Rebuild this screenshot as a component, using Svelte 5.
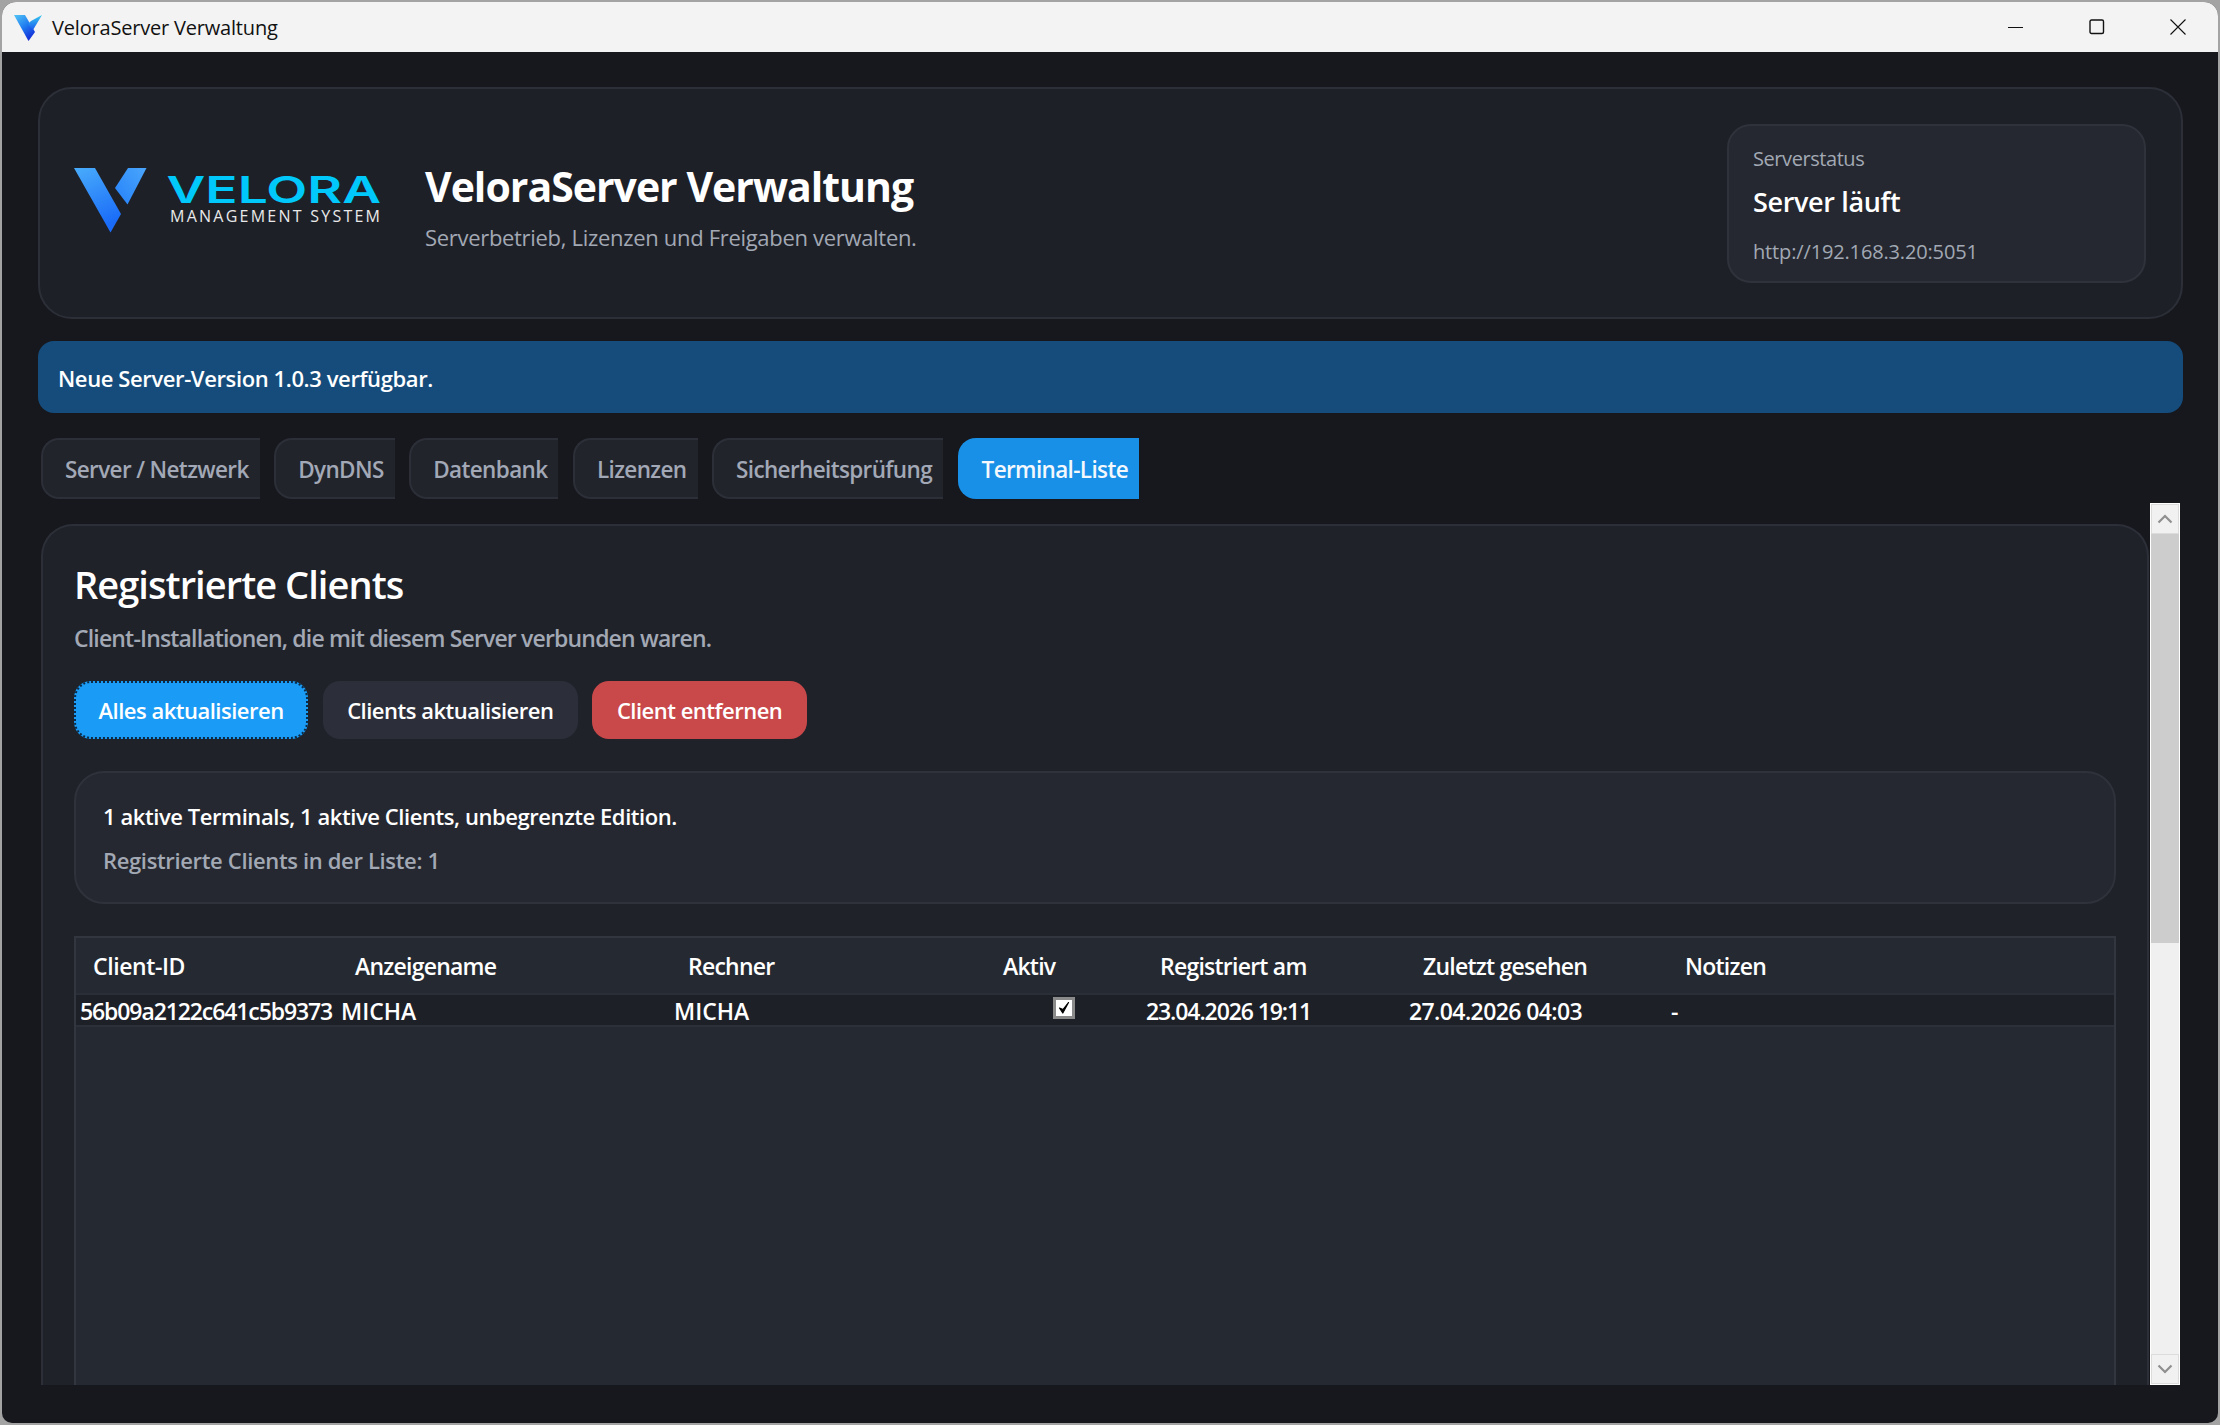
<script>
  const tabs = ['Server / Netzwerk', 'DynDNS', 'Datenbank', 'Lizenzen', 'Sicherheitsprüfung', 'Terminal-Liste'];
  const heads = ['Client-ID', 'Anzeigename', 'Rechner', 'Aktiv', 'Registriert am', 'Zuletzt gesehen', 'Notizen'];
</script>

<div class="window">
  <div class="titlebar">
    <svg class="appicon" viewBox="0 0 28 27" width="28" height="27">
      <defs>
        <linearGradient id="ti" x1="0" y1="0" x2="0.6" y2="1">
          <stop offset="0" stop-color="#53c6f5" />
          <stop offset="0.55" stop-color="#1f7bf0" />
          <stop offset="1" stop-color="#1430d8" />
        </linearGradient>
        <linearGradient id="tj" x1="0" y1="0" x2="0" y2="1">
          <stop offset="0" stop-color="#36c8ee" />
          <stop offset="1" stop-color="#1a5cf0" />
        </linearGradient>
      </defs>
      <path d="M0 1 H11 L21 18 L14.5 27 Z" fill="url(#ti)" />
      <path d="M17 7 L28 1 L19 16 L14 10 Z" fill="url(#tj)" />
    </svg>
    <span class="apptitle">VeloraServer Verwaltung</span>
    <div class="controls">
      <svg viewBox="0 0 16 16" width="16" height="16"><path d="M0 8.5 H15" stroke="#111" stroke-width="1.1" /></svg>
      <svg viewBox="0 0 16 16" width="16" height="16"><rect x="1" y="1" width="13.5" height="13.5" rx="1.5" fill="none" stroke="#111" stroke-width="1.4" /></svg>
      <svg viewBox="0 0 16 16" width="16" height="16"><path d="M0.5 0.5 L15.5 15.5 M15.5 0.5 L0.5 15.5" stroke="#111" stroke-width="1.1" /></svg>
    </div>
  </div>

  <div class="content">
    <header class="hero">
      <svg class="logo" viewBox="0 0 310 66" width="310" height="66">
        <defs>
          <linearGradient id="la" x1="0" y1="0" x2="0.3" y2="1">
            <stop offset="0" stop-color="#49acfb" />
            <stop offset="1" stop-color="#1a6cf8" />
          </linearGradient>
          <linearGradient id="lb" x1="1" y1="0" x2="0" y2="1">
            <stop offset="0" stop-color="#4aa6fb" />
            <stop offset="1" stop-color="#2581fa" />
          </linearGradient>
        </defs>
        <path d="M0 0 H21 L47 46 L36.5 64.5 Z" fill="url(#la)" />
        <path d="M54 0 H72.5 L53.5 36.5 L41 20 Z" fill="url(#lb)" />
        <text class="lv" x="92.5" y="35" textLength="214.5" lengthAdjust="spacingAndGlyphs">VELORA</text>
        <text class="lm" x="96" y="54" textLength="210" lengthAdjust="spacing">MANAGEMENT SYSTEM</text>
      </svg>
      <div class="herotext">
        <h1>VeloraServer Verwaltung</h1>
        <p>Serverbetrieb, Lizenzen und Freigaben verwalten.</p>
      </div>
      <div class="status">
        <div class="st-label">Serverstatus</div>
        <div class="st-value">Server läuft</div>
        <div class="st-url">http://192.168.3.20:5051</div>
      </div>
    </header>

    <div class="banner">Neue Server-Version 1.0.3 verfügbar.</div>

    <nav class="tabs">
      {#each tabs as t, i}
        <button class="tab" class:active={i === 5}>{t}</button>
      {/each}
    </nav>

    <div class="scrollarea">
      <section class="panel">
        <h2>Registrierte Clients</h2>
        <p class="sub">Client-Installationen, die mit diesem Server verbunden waren.</p>
        <div class="actions">
          <button class="btn primary">Alles aktualisieren</button>
          <button class="btn neutral">Clients aktualisieren</button>
          <button class="btn danger">Client entfernen</button>
        </div>
        <div class="info">
          <div class="info-a">1 aktive Terminals, 1 aktive Clients, unbegrenzte Edition.</div>
          <div class="info-b">Registrierte Clients in der Liste: 1</div>
        </div>
        <div class="table">
          <div class="row head">
            {#each heads as h}<div class="hc">{h}</div>{/each}
          </div>
          <div class="row body">
            <div class="c digits clip">56b09a2122c641c5b9373</div>
            <div class="c name">MICHA</div>
            <div class="c name">MICHA</div>
            <div class="c center">
              <span class="check">
                <svg viewBox="0 0 16 16" width="16" height="16"><path d="M3.5 8 L6.8 13 L12.5 2.5 L7 9.5 Z" fill="#000" stroke="#000" stroke-width="1.2" stroke-linejoin="round" /></svg>
              </span>
            </div>
            <div class="c digits">23.04.2026 19:11</div>
            <div class="c digits wide">27.04.2026 04:03</div>
            <div class="c">-</div>
          </div>
        </div>
      </section>

      <div class="scrollbar">
        <div class="sb-btn"><svg viewBox="0 0 16 10" width="16" height="10"><path d="M1.5 8.5 L8 2 L14.5 8.5" fill="none" stroke="#8f8f8f" stroke-width="2.2" /></svg></div>
        <div class="sb-thumb"></div>
        <div class="sb-track"></div>
        <div class="sb-btn"><svg viewBox="0 0 16 10" width="16" height="10"><path d="M1.5 1.5 L8 8 L14.5 1.5" fill="none" stroke="#8f8f8f" stroke-width="2.2" /></svg></div>
      </div>
    </div>
  </div>
</div>

<style>
  :global(body) {
    margin: 0;
    background: #a3a3a3;
    font-family: "Open Sans", "Noto Sans", sans-serif;
  }
  .window {
    box-sizing: border-box;
    width: 2216px;
    height: 1421px;
    margin: 2px;
    border-radius: 14px 14px 10px 10px;
    overflow: hidden;
    background: #17181d;
    display: flex;
    flex-direction: column;
  }
  .titlebar {
    height: 50px;
    flex: none;
    background: #f3f3f3;
    display: flex;
    align-items: center;
    padding-left: 12px;
    color: #111;
  }
  .appicon { margin-right: 10px; }
  .apptitle { font-size: 20px; letter-spacing: -0.19px; }
  .controls {
    margin-left: auto;
    margin-right: 32px;
    display: flex;
    gap: 65px;
  }
  .content {
    padding: 35px 35px 0 36px;
    display: flex;
    flex-direction: column;
  }
  .hero {
    box-sizing: border-box;
    height: 232px;
    background: #1e2027;
    border: 2px solid #2c2f38;
    border-radius: 34px;
    display: flex;
    align-items: center;
    padding: 0 35px 0 34px;
  }
  .logo { flex: none; margin-top: -4px; }
  .lv {
    font-family: "Inter", sans-serif;
    font-weight: 600;
    font-size: 37px;
    fill: #00c8fa;
  }
  .lm {
    font-family: "Open Sans", sans-serif;
    font-size: 16px;
    fill: #e9e9ea;
  }
  .herotext { margin-left: 41px; margin-top: 4px; }
  h1 {
    margin: 0;
    font-size: 41px;
    line-height: 54px;
    font-weight: 700;
    color: #fff;
    letter-spacing: -1px;
  }
  .herotext p {
    margin: 9px 0 0;
    font-size: 22px;
    line-height: 30px;
    color: #a2a8b4;
    letter-spacing: -0.31px;
  }
  .status {
    box-sizing: border-box;
    margin-left: auto;
    width: 419px;
    height: 159px;
    background: #252830;
    border: 2px solid #2f323b;
    border-radius: 24px;
    padding: 19px 24px;
  }
  .st-label { font-size: 20px; line-height: 27px; color: #a2a8b4; letter-spacing: -0.43px; }
  .st-value { font-size: 27px; line-height: 36px; font-weight: 600; color: #fff; margin-top: 12px; letter-spacing: -0.35px; }
  .st-url { font-size: 20px; line-height: 27px; color: #a2a8b4; margin-top: 18px; letter-spacing: -0.15px; }
  .banner {
    box-sizing: border-box;
    height: 72px;
    margin-top: 22px;
    background: #154c7c;
    border-radius: 16px;
    display: flex;
    align-items: center;
    padding: 2px 0 0 20px;
    color: #fff;
    font-size: 22px;
    font-weight: 600;
    letter-spacing: -0.39px;
  }
  .tabs {
    margin: 25px 0 0 3px;
    display: flex;
    gap: 14.5px;
    height: 61px;
  }
  .tab {
    box-sizing: border-box;
    height: 61px;
    font: inherit;
    font-size: 22.5px;
    font-weight: 600;
    letter-spacing: -0.63px;
    padding: 2px 11px 0 22px;
    background: #21242b;
    color: #a2a8b6;
    border: 2px solid #2c2f38;
    border-right: none;
    border-radius: 18px 0 0 18px;
    white-space: nowrap;
  }
  .tab.active {
    background: #1890e8;
    border-color: #1890e8;
    color: #f4f8fc;
  }
  .scrollarea {
    margin: 4px -3px 0 3px;
    height: 882px;
    display: flex;
    gap: 1px;
    overflow: hidden;
  }
  .panel {
    box-sizing: border-box;
    flex: none;
    width: 2108px;
    height: 1100px;
    margin-top: 21px;
    background: #1f2229;
    border: 2px solid #2c2f38;
    border-bottom: none;
    border-radius: 32px 32px 0 0;
    padding: 33px 31px 0 31px;
  }
  h2 {
    margin: 0;
    font-size: 38px;
    line-height: 50px;
    font-weight: 600;
    color: #fff;
    letter-spacing: -0.95px;
  }
  .sub {
    margin: 14px 0 0;
    font-size: 23px;
    line-height: 30px;
    font-weight: 600;
    color: #a2a8b4;
    letter-spacing: -0.83px;
  }
  .actions { margin-top: 28px; display: flex; gap: 14.5px; }
  .btn {
    height: 58px;
    font: inherit;
    font-size: 22px;
    font-weight: 600;
    letter-spacing: -0.5px;
    color: #fff;
    border: none;
    border-radius: 17px;
    padding: 0 24.5px;
    white-space: nowrap;
  }
  .primary { background: #1a9bf5; outline: 2px dotted #0b2a47; outline-offset: -2px; }
  .neutral { background: #2c2f3a; }
  .danger { background: #c9484a; }
  .info {
    box-sizing: border-box;
    margin-top: 32px;
    height: 133px;
    background: #252830;
    border: 2px solid #2f323b;
    border-radius: 30px;
    padding: 28px 27px;
  }
  .info-a { font-size: 22px; line-height: 30px; font-weight: 600; color: #fff; letter-spacing: -0.43px; }
  .info-b { font-size: 22px; line-height: 30px; font-weight: 600; color: #a2a8b4; margin-top: 14px; letter-spacing: -0.35px; }
  .table {
    box-sizing: border-box;
    margin-top: 32px;
    height: 640px;
    background: #252a32;
    border: 2px solid #32363f;
    border-bottom: none;
  }
  .row {
    display: grid;
    grid-template-columns: 261px 333px 315px 157px 263px 262px 1fr;
  }
  .head { height: 55px; align-items: center; border-bottom: 2px solid #2a2e36; }
  .hc {
    padding-left: 18px;
    font-size: 23px;
    font-weight: 600;
    color: #fff;
    letter-spacing: -0.76px;
    white-space: nowrap;
  }
  .hc:first-child { padding-left: 17px; letter-spacing: -0.4px; }
  .body {
    height: 30px;
    background: #1e2027;
    border-bottom: 2px solid #2c3039;
    align-items: center;
  }
  .c {
    padding-left: 4px;
    font-size: 23px;
    font-weight: 600;
    color: #fff;
    white-space: nowrap;
  }
  .digits { letter-spacing: -1.1px; }
  .wide { letter-spacing: -0.6px; }
  .name { letter-spacing: 0; }
  .clip { overflow: hidden; }
  .center { padding: 0; display: flex; justify-content: center; height: 30px; align-items: flex-start; padding-top: 2px; }
  .check {
    box-sizing: border-box;
    width: 22px;
    height: 22px;
    background: #fff;
    border: 3px solid #8a8a8a;
    display: flex;
    align-items: center;
    justify-content: center;
  }
  .scrollbar {
    box-sizing: border-box;
    flex: none;
    width: 30px;
    height: 882px;
    background: #f0f0f0;
    border: 1px solid #fff;
    display: flex;
    flex-direction: column;
  }
  .sb-btn {
    flex: none;
    height: 28px;
    background: #f1f1f1;
    border: 1px solid #dcdcdc;
    display: flex;
    align-items: center;
    justify-content: center;
  }
  .sb-thumb { flex: none; height: 409px; background: #cdcdcd; }
  .sb-track { flex: 1; }
</style>
